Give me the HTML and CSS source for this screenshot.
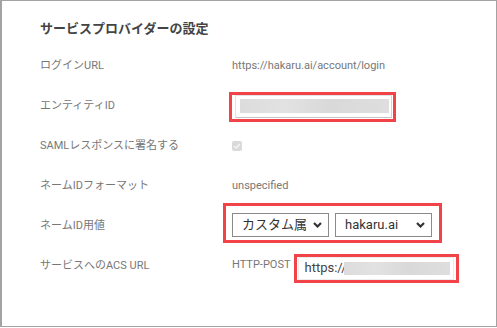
FILE: index.html
```html
<!DOCTYPE html>
<html lang="ja">
<head>
<meta charset="utf-8">
<title>サービスプロバイダーの設定</title>
<link rel="stylesheet" href="styles.css">
</head>
<body>
<section class="panel">
  <h2 class="title">サービスプロバイダーの設定</h2>
  <div class="form">
    <div class="row">
      <div class="label">ログインURL</div>
      <div class="value">https://hakaru.ai/account/login</div>
    </div>
    <div class="row">
      <div class="label">エンティティID</div>
      <div class="value">
        <div class="mark mark-entity">
          <div class="field field-entity"><span class="redact redact-entity"></span></div>
        </div>
      </div>
    </div>
    <div class="row">
      <div class="label">SAMLレスポンスに署名する</div>
      <div class="value">
        <span class="check">
          <svg width="10" height="10" viewBox="0 0 10 10"><path d="M2.2 5.2 L4.1 7 L7.9 2.9" fill="none" stroke="#f4f4f4" stroke-width="1.5"/></svg>
        </span>
      </div>
    </div>
    <div class="row">
      <div class="label">ネームIDフォーマット</div>
      <div class="value">unspecified</div>
    </div>
    <div class="row">
      <div class="label">ネームID用値</div>
      <div class="value">
        <div class="mark mark-selects">
          <div class="select">
            <span class="select-text">カスタム属</span>
            <svg class="chev" width="9" height="6" viewBox="0 0 9 6"><path d="M1 1 L4.5 4.5 L8 1" fill="none" stroke="#333" stroke-width="2.2"/></svg>
          </div>
          <div class="select">
            <span class="select-text">hakaru.ai</span>
            <svg class="chev" width="9" height="6" viewBox="0 0 9 6"><path d="M1 1 L4.5 4.5 L8 1" fill="none" stroke="#333" stroke-width="2.2"/></svg>
          </div>
        </div>
      </div>
    </div>
    <div class="row">
      <div class="label">サービスへのACS URL</div>
      <div class="value value-acs">
        <span class="binding">HTTP-POST</span>
        <div class="mark mark-acs">
          <div class="field field-acs"><span class="acs-text">https://</span><span class="redact redact-acs"></span></div>
        </div>
      </div>
    </div>
  </div>
</section>
</body>
</html>
```

FILE: styles.css
```css
* { box-sizing: border-box; }
html, body { margin: 0; padding: 0; background: #fff; }
body {
  font-family: "Roboto", "Noto Sans CJK JP", sans-serif;
  width: 497px;
  height: 328px;
}
.panel {
  width: 497px;
  height: 327px;
  border-top: 1px solid #a3a3a3;
  border-right: 1px solid #a3a3a3;
  border-bottom: 1px solid #a3a3a3;
  border-left: 2px solid #a3a3a3;
  padding: 19px 0 0 38px;
}
.title {
  margin: 0 0 8px 0;
  font-size: 13px;
  line-height: 18px;
  font-weight: 700;
  color: #444;
}
.form { display: flex; flex-direction: column; }
.row {
  display: grid;
  grid-template-columns: 192px 1fr;
  height: 40px;
  align-items: center;
}
.label, .value {
  font-size: 11px;
  line-height: 16px;
  color: #777;
}
.value { display: flex; align-items: center; }
.mark { border: 3px solid #f24448; }
.mark-entity {
  margin-left: -3px;
  margin-top: 2px;
  padding: 0 3px 1px 3px;
  width: 167px;
}
.field {
  display: flex;
  align-items: center;
  background: #fff;
  border: 1px solid #e4e4e4;
  border-bottom-color: #c6c6c6;
  border-right-color: #d4d4d4;
}
.field-entity {
  width: 157px;
  height: 23px;
  padding: 0 2px 0 4px;
  align-items: flex-start;
  padding-top: 3px;
}
.redact {
  display: block;
  background: linear-gradient(90deg, #dcdcdc 0%, #e2e2e2 30%, #d9d9d9 60%, #dedede 100%);
}
.redact-entity { width: 149px; height: 14px; }
.check {
  display: inline-flex;
  width: 10px;
  height: 10px;
  border-radius: 2px;
  background: #dadada;
}
.mark-selects {
  display: flex;
  gap: 6px;
  margin-left: -9px;
  margin-top: -6px;
  padding: 7px 7px 3px 6px;
}
.select {
  display: flex;
  align-items: center;
  justify-content: space-between;
  width: 97px;
  height: 24px;
  border: 1px solid #8a8a8a;
  padding: 0 6px 0 9px;
  font-size: 13px;
  color: #333;
  background: #fff;
}
.select-text { white-space: nowrap; }
.chev { flex: none; }
.value-acs { align-items: center; }
.binding { margin-right: 3px; margin-top: -3px; }
.mark-acs {
  margin-top: 4px;
  padding: 0 2px 0 1px;
  width: 165px;
}
.field-acs {
  height: 23px;
  padding: 0 3px 0 6px;
  border-color: #ececec;
}
.acs-text {
  font-size: 13px;
  color: #444;
  line-height: 16px;
}
.redact-acs { width: 107px; height: 13px; margin-left: -3px; }
```
